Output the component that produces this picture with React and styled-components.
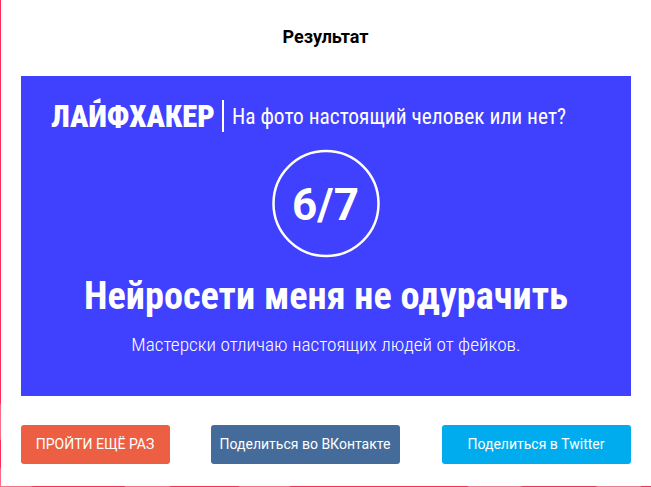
import React from 'react';
import styled, { createGlobalStyle } from 'styled-components';

const Global = createGlobalStyle`
  *{box-sizing:border-box}
  body{margin:0;background:#fff;font-family:Roboto,sans-serif;overflow:hidden}
`;

const Page = styled.main`
  width: 651px;
  height: 487px;
  display: grid;
  grid-template: 486px 1px / 1px 650px;
  background: #fff;
`;

const LeftEdge = styled.span`
  background: linear-gradient(
    #ff2a55 0 403px, #ff6d8b 405px 439px, #ff2a55 441px 467px, #ff6d8b 469px
  );
`;

const BottomEdge = styled.span`
  grid-column: 1 / -1;
  background: linear-gradient(
    90deg,
    #ff6d8b 0 31px, #f5305a 33px 124px, #ff6d8b 126px 169px, #f5305a 171px 238px,
    #ff6d8b 240px 289px, #f5305a 291px 467px, #f07a94 469px 520px, #e8345c 523px 595px,
    #f07a94 598px 640px, #e8345c 642px
  );
`;

const Content = styled.div`
  padding: 0 20px;
  width: 650px;
`;

const Heading = styled.h1`
  margin: 0;
  height: 76px;
  font-size: 18px;
  line-height: 74px;
  font-weight: 700;
  text-align: center;
  color: #000;
  padding-right: 1px;
`;

const Card = styled.section`
  width: 610px;
  height: 320px;
  background: #4040ff;
  color: #fff;
  display: flex;
  flex-direction: column;
  align-items: center;
`;

const CardHeader = styled.header`
  align-self: stretch;
  display: flex;
  align-items: center;
  height: 73px;
  padding: 7px 0 0 30px;
`;

const Logo = styled.div`
  position: relative;
  width: 171px;
  height: 32px;
`;

const Wordmark = styled.span`
  display: block;
  font: 900 30.5px/36px "Roboto Condensed", Roboto, sans-serif;
  white-space: nowrap;
  margin-top: -1px;
  clip-path: inset(6px 0 0 0);
`;

const Accent = styled.svg`
  position: absolute;
  left: 42px;
  top: -2px;
`;

const Divider = styled.span`
  width: 2px;
  height: 32px;
  background: #fff;
  margin-right: 8px;
`;

const Question = styled.span`
  font: 400 21.4px/32px "Roboto Condensed", Roboto, sans-serif;
  white-space: nowrap;
  padding-top: 2px;
`;

const Score = styled.div`
  position: relative;
  width: 110px;
  height: 110px;
  display: flex;
  align-items: center;
  justify-content: center;
  font-size: 44px;
  font-weight: 700;
  line-height: 52px;
  padding: 2px 1px 0 0;
`;

const Ring = styled.svg`
  position: absolute;
  inset: 0;
`;

const Title = styled.h2`
  margin: 12px 0 0;
  font: 700 38.25px/50px "Roboto Condensed", Roboto, sans-serif;
  white-space: nowrap;
`;

const Note = styled.p`
  margin: 11px 0 0;
  font: 300 19.25px/26px "Roboto Condensed", Roboto, sans-serif;
  white-space: nowrap;
`;

const Actions = styled.div`
  width: 610px;
  margin-top: 29px;
  display: grid;
  grid-template-columns: 149px 189px 189px;
  column-gap: 41px;

  & > :last-child {
    margin-left: 1px;
    margin-right: -1px;
  }
`;

const Action = styled.button`
  height: 39px;
  padding: 0 1px 1px 0;
  border: 0;
  border-radius: 3px;
  background: ${p => p.$color};
  color: #fff;
  font: 430 14px/20px Roboto, sans-serif;
  white-space: nowrap;
`;

export default function App() {
  return (
    <>
      <Global />
      <Page>
        <LeftEdge />
        <Content>
          <Heading>Результат</Heading>
          <Card>
            <CardHeader>
              <Logo>
                <Wordmark>ЛАЙФХАКЕР</Wordmark>
                <Accent width="8" height="6" viewBox="0 0 8 6" fill="#fff" aria-hidden="true">
                  <path d="M7.5 0v5H.5V3z" />
                </Accent>
              </Logo>
              <Divider />
              <Question>На фото настоящий человек или нет?</Question>
            </CardHeader>
            <Score>
              <Ring viewBox="0 0 110 110" fill="none" stroke="#fff" strokeWidth="2.5" aria-hidden="true">
                <circle cx="55" cy="54.5" r="52.5" />
              </Ring>
              6/7
            </Score>
            <Title>Нейросети меня не одурачить</Title>
            <Note>Мастерски отличаю настоящих людей от фейков.</Note>
          </Card>
          <Actions>
            <Action $color="#ec5f43">ПРОЙТИ ЕЩЁ РАЗ</Action>
            <Action $color="#456b9b">Поделиться во ВКонтакте</Action>
            <Action $color="#00aced">Поделиться в Twitter</Action>
          </Actions>
        </Content>
        <BottomEdge />
      </Page>
    </>
  );
}
